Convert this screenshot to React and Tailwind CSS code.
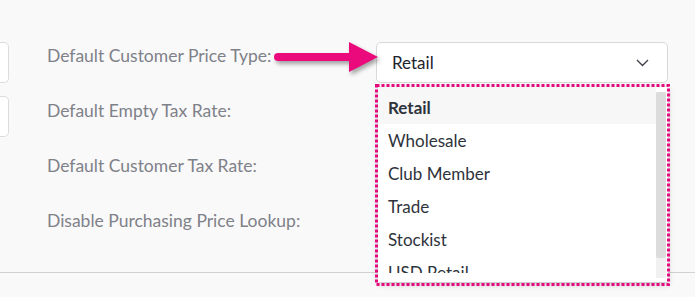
// App.jsx
import React from 'react';

const LABELS = [
  'Default Customer Price Type:',
  'Default Empty Tax Rate:',
  'Default Customer Tax Rate:',
  'Disable Purchasing Price Lookup:',
];

const PRICE_TYPES = ['Retail', 'Wholesale', 'Club Member', 'Trade', 'Stockist', 'USD Retail'];

// ===== PINK CALLOUT ARROW =====
function CalloutArrow() {
  return (
    <svg
      width="110"
      height="40"
      viewBox="0 0 110 40"
      className="absolute left-[270px] top-[38px] drop-shadow-[2px_3px_2px_rgba(0,0,0,0.35)]"
    >
      <line x1="8" y1="19" x2="82" y2="19" stroke="#ea0a7b" strokeWidth="8" strokeLinecap="round" />
      <polygon points="79,4 108,19 79,34" fill="#ea0a7b" />
    </svg>
  );
}

// ===== DOTTED HIGHLIGHT BOX =====
function DottedBox() {
  return (
    <svg width="297" height="204" className="absolute left-[374px] top-[83px] pointer-events-none">
      <rect
        x="2.5"
        y="2.5"
        width="292"
        height="199"
        fill="none"
        stroke="#e5097f"
        strokeWidth="3"
        strokeDasharray="3 2"
      />
    </svg>
  );
}

export default function App() {
  return (
    <div className="relative w-[695px] h-[297px] overflow-hidden bg-[#f9f9f9] font-['Lato',sans-serif]">
      <div className="flex pt-[42px] h-[273px] border-b border-[#d2d2d2]">
        {/* Left: clipped inputs of previous column */}
        <div className="flex flex-col gap-[13px] w-[9px]">
          <div className="h-[41px] bg-white border-y border-r border-[#dcdcdc] rounded-r-[5px]" />
          <div className="h-[41px] bg-white border-y border-r border-[#dcdcdc] rounded-r-[5px]" />
        </div>

        {/* Labels */}
        <div className="ml-[38px] w-[329px] flex flex-col pt-[1px]">
          {LABELS.map((l) => (
            <div key={l} className="h-[55px] text-[17.5px] leading-[26px] text-[#7f8189]">
              {l}
            </div>
          ))}
        </div>

        {/* Select */}
        <div>
          <div className="w-[292px] h-[41px] bg-white border border-[#d8d8d8] rounded-[5px] flex items-center justify-between pl-[15px] pr-[18px]">
            <span className="text-[17px] text-[#1d232c]">Retail</span>
            <svg width="13" height="8" viewBox="0 0 13 8">
              <polyline points="1,1 6.5,6.5 12,1" fill="none" stroke="#3a3f47" strokeWidth="1.3" />
            </svg>
          </div>
        </div>
      </div>

      {/* Open dropdown list */}
      <div className="absolute left-[378px] top-[87px] w-[290px] h-[195px] bg-white shadow-[0_2px_6px_rgba(0,0,0,0.25)] flex">
        <div className="flex-1 h-[186px] overflow-hidden">
          {PRICE_TYPES.map((p, i) => (
            <div
              key={p}
              className={
                i === 0
                  ? 'h-[37px] pt-[4px] pl-[10px] bg-[#f7f7f7] text-[17px] leading-[33px] font-bold text-[#2e333b]'
                  : 'h-[33px] pl-[10px] text-[17px] leading-[33px] text-[#2e333b]'
              }
            >
              {p}
            </div>
          ))}
        </div>
        <div className="w-[10px] mt-[5px] mb-[4px] mr-[2px] bg-[#f1f1f1] flex flex-col">
          <div className="h-[166px] bg-[#dcdcdc] rounded-[2px]" />
        </div>
      </div>

      <DottedBox />
      <CalloutArrow />
    </div>
  );
}
